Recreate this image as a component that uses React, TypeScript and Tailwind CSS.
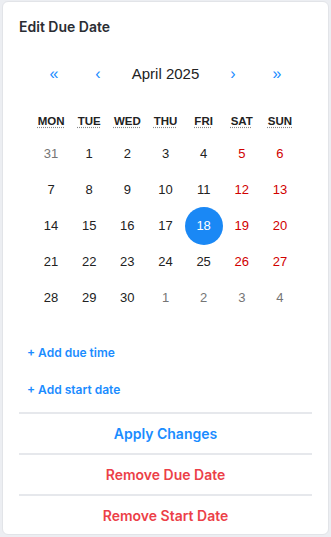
import React from 'react';

const weekdays = ['MON', 'TUE', 'WED', 'THU', 'FRI', 'SAT', 'SUN'];

interface Day {
  n: number;
  other?: boolean;
}

const buildDays = (): Day[] => {
  const days: Day[] = [{ n: 31, other: true }];
  for (let i = 1; i <= 30; i++) days.push({ n: i });
  for (let i = 1; i <= 4; i++) days.push({ n: i, other: true });
  return days;
};

const App: React.FC = () => {
  const days = buildDays();

  return (
    <div className="w-[331px] h-[537px] bg-[#eceef2] pl-[2px] pr-[2px] pt-[1px] pb-[2px] font-['Inter',sans-serif]">
      <div className="h-full bg-white rounded-[6px] border border-[#e2e4e8] px-[16px] flex flex-col">
        <h2 className="mt-[15px] text-[14px] font-semibold text-[#2a2d33] leading-[20px]">Edit Due Date</h2>

        {/* calendar */}
        <div className="mx-[13px] mt-[26px] font-['Liberation_Sans',Arial,sans-serif]">
          <div className="grid grid-cols-[44px_44px_1fr_44px_44px] items-center h-[20px] text-[#1a8cff]">
            <button className="text-[16px] leading-none text-center">«</button>
            <button className="text-[16px] leading-none text-center">‹</button>
            <span className="text-[15px] text-[#222] text-center whitespace-nowrap">April 2025</span>
            <button className="text-[16px] leading-none text-center">›</button>
            <button className="text-[16px] leading-none text-center">»</button>
          </div>

          <div className="grid grid-cols-7 mt-[29px]">
            {weekdays.map((d) => (
              <div key={d} className="text-center text-[11.5px] font-bold text-[#222] leading-[18px]">
                <abbr className="underline decoration-dotted decoration-[#888] underline-offset-[2px]">{d}</abbr>
              </div>
            ))}
          </div>

          <div className="grid grid-cols-7 mt-[6px]">
            {days.map((d, i) => {
              const col = i % 7;
              const selected = !d.other && d.n === 18;
              let color = 'text-[#222]';
              if (d.other) color = 'text-[#757575]';
              else if (col >= 5) color = 'text-[#d10000]';
              return (
                <div key={i} className="h-[36px] flex items-center justify-center">
                  {selected ? (
                    <span className="w-[38px] h-[38px] rounded-full bg-[#1a88f5] text-white flex items-center justify-center text-[13px]">
                      {d.n}
                    </span>
                  ) : (
                    <span className={`text-[13px] ${color}`}>{d.n}</span>
                  )}
                </div>
              );
            })}
          </div>
        </div>

        <div className="mt-[29px] pl-[8px] flex flex-col gap-[21px] text-[12px] font-semibold text-[#1a8cff] leading-[16px]">
          <button className="text-left">+ Add due time</button>
          <button className="text-left">+ Add start date</button>
        </div>

        <div className="mt-[14px] flex flex-col">
          <button className="border-t-2 border-[#e6e8ec] h-[41px] text-[14px] font-semibold text-[#1a8cff]">Apply Changes</button>
          <button className="border-t-2 border-[#e6e8ec] h-[41px] text-[14px] font-semibold text-[#ec3f48]">Remove Due Date</button>
          <button className="border-t-2 border-[#e6e8ec] h-[41px] text-[14px] font-semibold text-[#ec3f48]">Remove Start Date</button>
        </div>
      </div>
    </div>
  );
};

export default App;
